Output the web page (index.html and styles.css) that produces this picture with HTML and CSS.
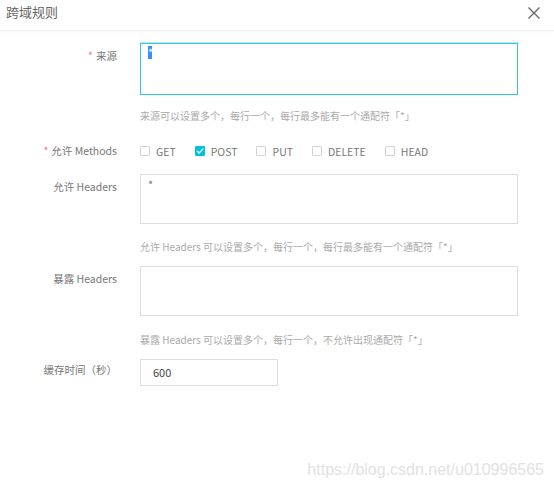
FILE: index.html
```html
<!DOCTYPE html>
<html lang="zh-CN">
<head>
<meta charset="utf-8">
<title>跨域规则</title>
<link rel="stylesheet" href="styles.css">
</head>
<body>
<div class="page">
  <div class="header">
    <span class="title">跨域规则</span>
    <span class="close">
      <svg width="12" height="12" viewBox="0 0 12 12"><path d="M0.5 0.5 L11.5 11.5 M11.5 0.5 L0.5 11.5" stroke="#666" stroke-width="1.3" fill="none"/></svg>
    </span>
  </div>
  <div class="form">
    <div class="item">
      <div class="label"><span class="req">*</span>来源</div>
      <div class="field">
        <div class="ta ta-focus"><span class="sel">*</span></div>
        <div class="help">来源可以设置多个，每行一个，每行最多能有一个通配符「*」</div>
      </div>
    </div>
    <div class="item item-methods">
      <div class="label label-flat"><span class="req">*</span>允许 Methods</div>
      <div class="checks">
        <span class="check"><span class="box"></span>GET</span>
        <span class="check"><span class="box box-on"><svg width="10" height="10" viewBox="0 0 10 10"><path d="M2 5 L4.1 7.1 L8.2 2.6" stroke="#fff" stroke-width="1.4" fill="none"/></svg></span>POST</span>
        <span class="check"><span class="box"></span>PUT</span>
        <span class="check"><span class="box"></span>DELETE</span>
        <span class="check"><span class="box"></span>HEAD</span>
      </div>
    </div>
    <div class="item item-allow">
      <div class="label">允许 Headers</div>
      <div class="field">
        <div class="ta ta-50">*</div>
        <div class="help help-16">允许 Headers 可以设置多个，每行一个，每行最多能有一个通配符「*」</div>
      </div>
    </div>
    <div class="item item-expose">
      <div class="label">暴露 Headers</div>
      <div class="field">
        <div class="ta ta-50"></div>
        <div class="help help-17">暴露 Headers 可以设置多个，每行一个，不允许出现通配符「*」</div>
      </div>
    </div>
    <div class="item item-cache">
      <div class="label label-input">缓存时间（秒）</div>
      <div class="field">
        <div class="input">600</div>
      </div>
    </div>
  </div>
  <div class="watermark">https://blog.csdn.net/u010996565</div>
</div>
</body>
</html>
```
FILE: styles.css
```css
html, body {
  margin: 0;
  padding: 0;
  background: #fff;
}
body {
  font-family: "Noto Sans CJK SC", "Noto Sans", sans-serif;
}
.page {
  position: relative;
  width: 554px;
  height: 488px;
  overflow: hidden;
}
.header {
  height: 30px;
  display: flex;
  align-items: flex-start;
  justify-content: space-between;
  padding: 0 14px 0 6px;
  border-bottom: 1px solid #eeeeee;
  box-shadow: 0 1px 2px rgba(0, 0, 0, 0.03);
}
.title {
  font-size: 13px;
  line-height: 18px;
  margin-top: 3px;
  color: #666;
}
.close {
  display: block;
  width: 12px;
  height: 12px;
  margin-top: 7px;
}
.close svg {
  display: block;
}
.form {
  padding-top: 12px;
}
.item {
  display: grid;
  grid-template-columns: 117px 378px;
  column-gap: 23px;
}
.item-methods { margin-top: 20px; }
.item-allow { margin-top: 15px; }
.item-expose { margin-top: 12px; }
.item-cache { margin-top: 12px; }
.label {
  text-align: right;
  font-size: 10.5px;
  line-height: 16px;
  padding-top: 5px;
  color: #777;
  white-space: nowrap;
}
.label-flat { padding-top: 0; }
.label-input { padding-top: 3px; }
.req {
  color: #f47a7a;
  margin-right: 3px;
}
.ta {
  box-sizing: border-box;
  height: 52px;
  border: 1px solid #dddddd;
  padding: 2px 7px;
  font-size: 11px;
  line-height: 13px;
  color: #777;
}
.ta-50 { height: 50px; padding-top: 3px; }
.ta-focus {
  border-color: #2ec6e2;
  box-shadow: 0 -1px 0 rgba(46, 198, 226, 0.35);
}
.sel {
  display: inline-block;
  background: #3390ff;
  color: #fff;
  width: 4px;
  height: 13px;
  line-height: 13px;
  text-align: center;
}
.help {
  margin-top: 14px;
  font-size: 10px;
  line-height: 14px;
  color: #aaaaaa;
  white-space: nowrap;
}
.help-16 { margin-top: 16px; }
.help-17 { margin-top: 17px; }
.checks {
  display: flex;
  align-items: center;
  height: 16px;
}
.check {
  display: flex;
  align-items: center;
  margin-right: 19px;
  font-size: 10.5px;
  color: #777;
}
.box {
  box-sizing: border-box;
  width: 10px;
  height: 10px;
  border: 1px solid #d3d3d3;
  border-radius: 1px;
  margin-right: 6px;
  position: relative;
}
.box-on {
  background: #00c1de;
  border-color: #00c1de;
}
.box-on svg {
  position: absolute;
  left: -1px;
  top: -1px;
}
.input {
  box-sizing: border-box;
  width: 138px;
  height: 27px;
  border: 1px solid #dddddd;
  padding-left: 12px;
  font-size: 11px;
  line-height: 25px;
  color: #444;
}
.watermark {
  position: absolute;
  right: 10px;
  bottom: 9px;
  font-family: "Liberation Sans", Arial, sans-serif;
  font-size: 16px;
  line-height: 18px;
  color: #e2e2e2;
}
```
